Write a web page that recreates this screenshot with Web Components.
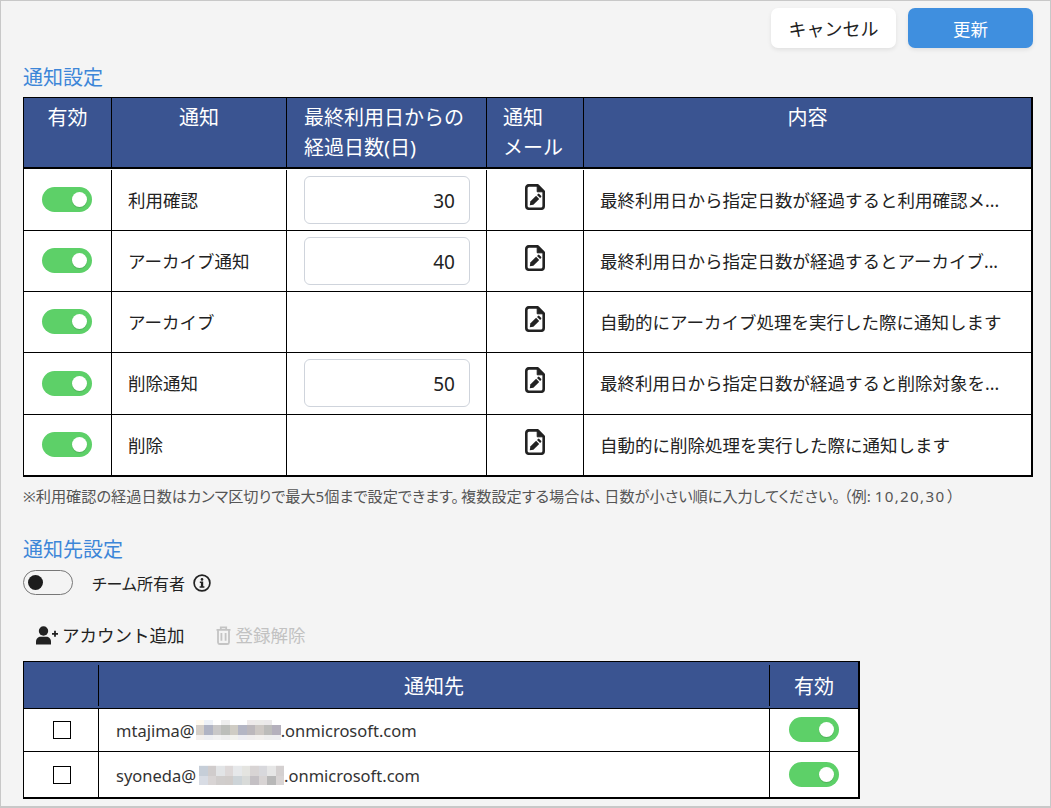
<!DOCTYPE html>
<html lang="ja"><head><meta charset="utf-8">
<style>
html,body{margin:0;padding:0;background:#f4f4f4}
body{font-family:"Noto Sans","Noto Sans CJK JP",sans-serif;color:#222}
</style></head><body>
<x-app>
  <x-actions>
    <x-button>キャンセル</x-button>
    <x-button primary>更新</x-button>
  </x-actions>
  <x-title>通知設定</x-title>
  <x-notify-table>
    <x-notify-row label="利用確認" days="30" desc="最終利用日から指定日数が経過すると利用確認メ..."></x-notify-row>
    <x-notify-row label="アーカイブ通知" days="40" desc="最終利用日から指定日数が経過するとアーカイブ..."></x-notify-row>
    <x-notify-row label="アーカイブ" desc="自動的にアーカイブ処理を実行した際に通知します"></x-notify-row>
    <x-notify-row label="削除通知" days="50" desc="最終利用日から指定日数が経過すると削除対象を..." style="--h:62px"></x-notify-row>
    <x-notify-row label="削除" desc="自動的に削除処理を実行した際に通知します" style="--h:60px;--line:0"></x-notify-row>
  </x-notify-table>
  <x-note>※利用確認の経過日数はカンマ区切りで最大5個まで設定できます。<span style="margin-left:2px">複数設定する場合は、</span><span style="margin-left:2px">日数が小さい順に入力してください。</span><span style="margin-left:4px">（例: </span><span style="letter-spacing:1.300px">10,20,30</span><span style="margin-left:2px">）</span></x-note>
  <x-title style="margin-top:33px;margin-bottom:11px">通知先設定</x-title>
  <x-owner-row></x-owner-row>
  <x-toolbar></x-toolbar>
  <x-dest-table>
    <x-dest-row user="mtajima@" seed="0" style="--tm:-1px"></x-dest-row>
    <x-dest-row user="syoneda@" seed="1" style="--h:45px;--line:0;--blm:3px;--ty:1px"></x-dest-row>
  </x-dest-table>
</x-app>
<script>
const FONT='"Noto Sans","Noto Sans CJK JP",sans-serif';
function def(name,css,html){
  customElements.define(name,class extends HTMLElement{
    constructor(){super();const r=this.attachShadow({mode:'open'});
      r.innerHTML='<style>'+css+'</style>'+(typeof html==='function'?'':html);}
    connectedCallback(){ if(typeof html==='function'&&!this._done){this._done=1;
      const d=document.createElement('template');d.innerHTML=html(this);this.shadowRoot.appendChild(d.content);}}
  });
}
const FILE=`<svg width="20" height="26" viewBox="0 0 20 26"><path d="M3.800 1.400H12.800L18.700 7.300V22A2.800 2.800 0 0 1 15.900 24.800H3.800A2.800 2.800 0 0 1 1.300 22V4A2.800 2.800 0 0 1 3.800 1.400Z" fill="#fff" stroke="#222" stroke-width="2.600" stroke-linejoin="round"/><path d="M12.200 1.500V7.800H18.500Z" fill="#222" stroke="#222" stroke-width="1"/><path d="M4.800 21.200L5.300 17.600L11.100 11.800L14.200 14.900L8.400 20.700Z" fill="#222"/><path d="M12 10.900L13 9.900A1 1 0 0 1 14.300 9.900L16.100 11.700A1 1 0 0 1 16.100 13L15.100 14Z" fill="#222"/></svg>`;

def('x-app',`:host{display:block;box-sizing:border-box;width:1051px;height:808px;overflow:hidden;background:#f4f4f4;
  border:1px solid #c8c8c8;border-bottom-width:2px;padding:7px 17px 0 22px;font-family:${FONT};color:#222}`,`<slot></slot>`);
def('x-actions',`:host{display:flex;justify-content:flex-end;gap:12px}`,`<slot></slot>`);
def('x-button',`:host{display:flex;align-items:center;justify-content:center;width:125px;height:40px;border-radius:7px;background:#fff;color:#222;font-size:18px;box-shadow:0 2px 4px rgba(0,0,0,.08)}
  :host([primary]){background:#3f8fdf;color:#fff;font-size:17.500px}`,`<slot></slot>`);
def('x-title',`:host{display:block;color:#3d86d8;font-size:20px;line-height:20px;margin:19px 0 10px}
  div{transform:translateY(1px)}`,`<div><slot></slot></div>`);
def('x-notify-table',`:host{display:block;box-sizing:border-box;width:1010px;border:solid #000;border-width:1px 2px 2px 1px;background:#fff}
  .h{display:grid;grid-template-columns:88px 175px 200px 97px 1fr;height:71px;background:#3a5491;color:#fff;font-size:20px;line-height:30px;text-align:center;border-bottom:2px solid #000;box-sizing:border-box}
  .h>div{border-right:1px solid #000;padding-top:5px;box-sizing:border-box}.h>div:last-child{border-right:0}
  .h>.t{text-align:left;padding-left:17px;white-space:nowrap}.h>.u{padding-left:16px}
  .b{padding-top:1px}`,
  `<div class="h"><div>有効</div><div>通知</div><div class="t">最終利用日からの<br>経過日数(日)</div><div class="t u">通知<br>メール</div><div>内容</div></div><div class="b"><slot></slot></div>`);
def('x-toggle',`:host{display:inline-block;box-sizing:border-box;width:50px;height:25px;border-radius:13px;background:#5dd068;position:relative;flex:none}
  i{position:absolute;top:5px;right:5px;width:15px;height:15px;border-radius:50%;background:#fff;box-shadow:0 1px 1px rgba(0,0,0,.15)}
  :host([off]){background:transparent;border:1px solid #777}
  :host([off]) i{background:#1c1c1c;left:4px;right:auto;top:4px;box-shadow:none}`,`<i></i>`);
def('x-notify-row',`:host{display:grid;grid-template-columns:88px 175px 200px 97px 1fr;height:var(--h,61px);box-sizing:border-box;font-size:17.500px;color:#222}
  .c{display:flex;align-items:center;border-right:1px solid #000;border-bottom:calc(var(--line,1) * 1px) solid #000;box-sizing:border-box;min-width:0;white-space:nowrap}
  .c:last-child{border-right:0}.m{justify-content:center}.l{padding-left:16px}.l span{margin-top:-2px}
  .in{box-sizing:border-box;width:166px;height:48px;border:1px solid #cfd4dc;border-radius:6px;background:#fff;text-align:right;padding:0 14px;line-height:49px;font-size:19px;margin-left:17px;margin-top:-1px}
  x-toggle{margin:-1px 1px 0 0}
  svg{display:block;margin-top:-7px}`,
  h=>`<div class="c m"><x-toggle></x-toggle></div><div class="c l"><span>${h.getAttribute('label')}</span></div><div class="c">${h.getAttribute('days')?`<div class="in">${h.getAttribute('days')}</div>`:''}</div><div class="c m">${FILE}</div><div class="c l"><span>${h.getAttribute('desc')}</span></div>`);
def('x-note',`:host{display:block;font-size:15.200px;line-height:20px;margin-top:9px;color:#555;white-space:nowrap;font-feature-settings:"palt"}`,`<slot></slot>`);
def('x-owner-row',`:host{display:flex;align-items:center;height:25px;font-size:16px;font-feature-settings:"palt";color:#222}
  span{margin-left:19px}svg{margin-left:8px}`,
  `<x-toggle off></x-toggle><span>チーム所有者</span><svg width="18" height="18" viewBox="0 0 18 18"><circle cx="9" cy="9" r="7.900" fill="none" stroke="#222" stroke-width="1.700"/><circle cx="9" cy="5.400" r="1.300" fill="#222"/><path d="M6.800 7.600H10.200V12.300H11.400V13.800H6.600V12.300H7.900V9.100H6.800Z" fill="#222"/></svg>`);
def('x-toolbar',`:host{display:flex;align-items:center;height:24px;margin:28px 0 14px;padding-left:13px;font-size:17.500px;white-space:nowrap}
  span{margin-top:-2px}
  .a{display:flex;align-items:center;gap:4px;color:#222}.d{display:flex;align-items:center;gap:5px;color:#c2c2c2;margin-left:31px}`,
  `<div class="a"><svg width="22" height="19" viewBox="0 0 22 19"><circle cx="7.500" cy="5" r="4.700" fill="#222"/><path d="M0 18.500V15.500C0 12.500 2.500 10.700 4.500 10.700H10.500C12.500 10.700 15 12.500 15 15.500V18.500Z" fill="#222"/><path d="M16 7.800H22M19 4.800V10.800" stroke="#222" stroke-width="1.800"/></svg><span>アカウント追加</span></div>
  <div class="d"><svg width="15" height="19" viewBox="0 0 15 19"><path d="M.500 3.800H14.500M4.800 3.600V1.300H10.200V3.600M2 4V16.300A1.900 1.900 0 0 0 3.900 18H11.100A1.900 1.900 0 0 0 13 16.300V4M5.400 7V14.800M9.600 7V14.800" fill="none" stroke="#c4c4c4" stroke-width="1.800"/></svg><span>登録解除</span></div>`);
def('x-dest-table',`:host{display:block;box-sizing:border-box;width:837px;border:solid #000;border-width:1px 2px 2px 1px;background:#fff}
  .h{display:grid;grid-template-columns:75px 671px 1fr;height:47px;background:#3a5491;color:#fff;font-size:20px;text-align:center;border-bottom:1px solid #000;box-sizing:border-box;align-items:center}
  .h>div{height:41px;line-height:44px;border-right:1px solid #000;box-sizing:border-box}.h>div:last-child{border-right:0}`,
  `<div class="h"><div></div><div>通知先</div><div>有効</div></div><slot></slot>`);
const BLUR=[
 {rows:'5px 10px 5px',cells:[
  ['#fffaf0','#eef2f8','#ffffff','#eeeeee','#ffffff','#ffffff','#eeeaea','#ecebe9','#ebe9ea','#ffffff'],
  ['#d5cfc8','#b0b4c4','#c9c8c8','#bcbeba','#cfccc4','#b4b6c4','#bcb8bc','#cdc8c4','#bcbcba','#b4b0bc'],
  ['#f3f0ee','#eeeff2','#f2f2f2','#eeeeee','#f2f2ee','#eeeef2','#f0eeee','#f2f0ee','#eeeeee','#eeeef0']]},
 {rows:'1px 10px 9px',cells:[
  ['#f4f6f8','#f6f4f4','#fafafa','#f8f6f6','#fafafa','#fafafa','#f6f4f4','#f6f6f8','#fafafa','#f6f4f4'],
  ['#c6ced8','#d0cccc','#e2e4e6','#ddd8d8','#e6e8ea','#e4e4e0','#d8d4d4','#d8d8dc','#e6e6e6','#d4d0d0'],
  ['#d8dce4','#d8d4d4','#d0cdcc','#d0ccca','#cdd4d8','#d8dad8','#c4c0c4','#d8d4d4','#b8b8b8','#d8d4d4']]}];
def('x-dest-row',`:host{display:grid;grid-template-columns:75px 671px 1fr;height:var(--h,43px);box-sizing:border-box;font-size:16.500px}
  .c{display:flex;align-items:center;border-right:1px solid #000;border-bottom:calc(var(--line,1) * 1px) solid #000;box-sizing:border-box;white-space:nowrap;color:#333}
  .c:last-child{border-right:0}.m{justify-content:center}.l{padding-left:17px}.l span:not(.bl){margin-top:var(--ty,0)}
  .box{width:18px;height:18px;border:1px solid #000;background:#fff;box-sizing:border-box;margin-left:2px}
  .bl{display:inline-grid;grid-template-columns:repeat(10,1fr);width:85px;height:20px;filter:blur(.5px);margin-left:var(--blm,1px)}
  x-toggle{margin-top:var(--tm,0)}`,
  h=>{const b=BLUR[+h.getAttribute('seed')];return `<div class="c m"><div class="box"></div></div><div class="c l"><span>${h.getAttribute('user')}</span><span class="bl" style="grid-template-rows:${b.rows}">${b.cells.flat().map(c=>`<i style="background:${c}"></i>`).join('')}</span><span>.onmicrosoft.com</span></div><div class="c m"><x-toggle></x-toggle></div>`});
</script>
</body></html>
